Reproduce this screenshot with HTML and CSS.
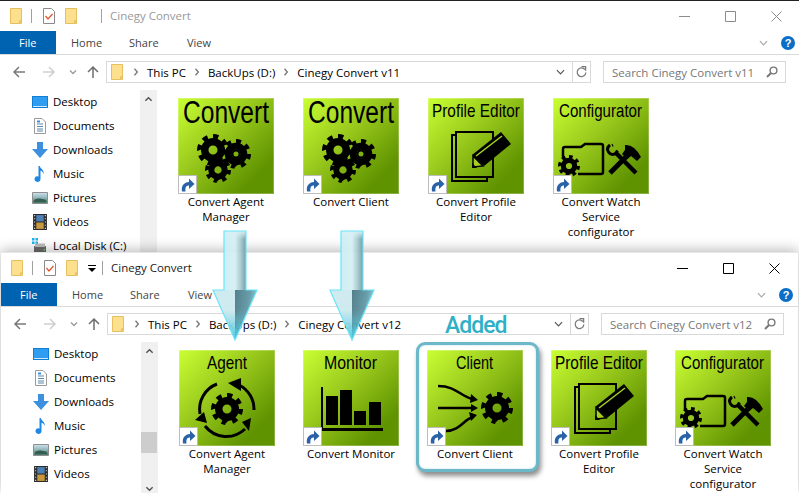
FILE: index.html
```html
<!DOCTYPE html>
<html lang="en">
<head>
    <meta charset="UTF-8">
    <title>Cinegy Convert</title>
    <link rel="stylesheet" href="styles.css">
</head>
<body>
    <!-- shared symbols -->
    <svg class="defs" aria-hidden="true">
        <defs>
            <linearGradient id="arrowFill" x1="0" y1="0" x2="1" y2="0">
                <stop offset="0" stop-color="#bfeef5"/>
                <stop offset="0.5" stop-color="#d6f0f4"/>
                <stop offset="0.62" stop-color="#a9ccd2"/>
                <stop offset="0.82" stop-color="#4f7f8b"/>
                <stop offset="1" stop-color="#6aa3af"/>
            </linearGradient>
            <linearGradient id="arrowTop" x1="0" y1="0" x2="0" y2="1">
                <stop offset="0" stop-color="#d6f0f4"/>
                <stop offset="1" stop-color="#d6f0f4" stop-opacity="0"/>
            </linearGradient>
            <linearGradient id="arrowShade" x1="0" y1="0" x2="1" y2="0.4">
                <stop offset="0" stop-color="#4a7885"/>
                <stop offset="0.6" stop-color="#5f97a4"/>
                <stop offset="1" stop-color="#8fd3df"/>
            </linearGradient>
            <linearGradient id="arrowTip" x1="0" y1="0" x2="0" y2="1">
                <stop offset="0.4" stop-color="#56c8dd" stop-opacity="0"/>
                <stop offset="1" stop-color="#3fc6de"/>
            </linearGradient>
            <linearGradient id="photo" x1="0" y1="0" x2="0" y2="1">
                <stop offset="0" stop-color="#cfe3ee"/>
                <stop offset="0.5" stop-color="#8fb4b8"/>
                <stop offset="1" stop-color="#3e6f60"/>
            </linearGradient>
        </defs>
        <symbol id="folder" viewBox="0 0 12 16">
            <path d="M.5.5h11v12.500h-2v2.500h-9z" fill="#fde08d" stroke="#e6c05f"/>
            <path d="M9.500 13h2v2.500h-2z" fill="#f5cf6e" stroke="#e6c05f"/>
        </symbol>
        <symbol id="check" viewBox="0 0 12 16">
            <path d="M.5.5h8l3 3v12h-11z" fill="#fff" stroke="#8a8a8a"/>
            <path d="M2.500 8l2.500 3 4.500-5" fill="none" stroke="#e4572b" stroke-width="1.300"/>
        </symbol>
        <symbol id="nav" viewBox="0 0 106 22">
            <path d="M25 11H14M19 6l-5 5 5 5" fill="none" stroke="#7a7a7a" stroke-width="1.500"/>
            <path d="M43 11h11M49 6l5 5-5 5" fill="none" stroke="#cfcfcf" stroke-width="1.500"/>
            <path d="M70 9.500l3 3 3-3" fill="none" stroke="#9a9a9a" stroke-width="1.300"/>
            <path d="M93 17V6M88 11l5-5 5 5" fill="none" stroke="#6e6e6e" stroke-width="1.500"/>
        </symbol>
        <symbol id="crumb" viewBox="0 0 4 8">
            <path d="M.5.8L3.300 4 .5 7.200" fill="none" stroke="#777" stroke-width="1.300"/>
        </symbol>
        <symbol id="chev-down" viewBox="0 0 10 6">
            <path d="M1 1l4 4 4-4" fill="none" stroke="currentColor" stroke-width="1.300"/>
        </symbol>
        <symbol id="chev-up" viewBox="0 0 10 6">
            <path d="M1.500 5L5 1.500 8.500 5" fill="none" stroke="#555" stroke-width="1.600"/>
        </symbol>
        <symbol id="refresh" viewBox="0 0 12 13">
            <path d="M9.800 4A4.700 4.700 0 1 0 10.700 7" fill="none" stroke="#7a7a7a" stroke-width="1.400"/>
            <path d="M6 .5h4.500V5" fill="none" stroke="#7a7a7a" stroke-width="1.400"/>
        </symbol>
        <symbol id="glass" viewBox="0 0 12 12">
            <circle cx="7.500" cy="4.500" r="3.400" fill="none" stroke="#777" stroke-width="1.400"/>
            <path d="M5 7l-4 4" stroke="#777" stroke-width="2"/>
        </symbol>
        <symbol id="min" viewBox="0 0 11 11"><path d="M0 5.500h11" stroke="currentColor"/></symbol>
        <symbol id="max" viewBox="0 0 11 11"><path d="M.5.5h10v10H.5z" fill="none" stroke="currentColor"/></symbol>
        <symbol id="close" viewBox="0 0 11 11"><path d="M.5.500l10 10M10.500.500l-10 10" stroke="currentColor"/></symbol>
        <symbol id="desktop" viewBox="0 0 16 12">
            <path d="M0 0h16v12H0z" fill="#0f7fd6"/>
            <path d="M1 1h14v9H1z" fill="#2f9df0"/>
            <path d="M1 10h14v1H1z" fill="#cfe7f8"/>
        </symbol>
        <symbol id="documents" viewBox="0 0 12 16">
            <path d="M.5.5h7.500l3.500 3.500v11.500H.5z" fill="#fff" stroke="#9a9a9a"/>
            <path d="M3 6h6M3 8.500h6M3 11h6M3 13h6" stroke="#5b87a8"/>
            <path d="M3 3.500h3" stroke="#3a8fd8" stroke-width="2"/>
        </symbol>
        <symbol id="downloads" viewBox="0 0 16 16">
            <path d="M5 0h6v7h5l-8 9-8-9h5z" fill="#3d8fdf"/>
        </symbol>
        <symbol id="music" viewBox="0 0 12 16">
            <path d="M4.500 0h1.300c.5 3 4.500 3.500 4 8-.6-2-2.200-3-3.300-3.200V13a3 2.800 0 1 1-2-2.500z" fill="#1e88e5"/>
        </symbol>
        <symbol id="pictures" viewBox="0 0 16 12">
            <path d="M.5.5h15v11H.5z" fill="url(#photo)" stroke="#8f8f8f"/>
            <path d="M2 8c3-2 6-2 12 0v2H2z" fill="#345e50"/>
        </symbol>
        <symbol id="videos" viewBox="0 0 13 15">
            <path d="M0 0h13v15H0z" fill="#2b2b2b"/>
            <path d="M3 1h7v6H3z" fill="#4c7fb5"/>
            <path d="M3 8h7v6H3z" fill="#c9983a"/>
            <path d="M1 1h1v1H1zM1 4h1v1H1zM1 7h1v1H1zM1 10h1v1H1zM1 13h1v1H1zM11 1h1v1h-1zM11 4h1v1h-1zM11 7h1v1h-1zM11 10h1v1h-1zM11 13h1v1h-1z" fill="#ddd"/>
        </symbol>
        <symbol id="disk" viewBox="0 0 16 16">
            <path d="M0 0h2.500v2.500H0zM3.500 0H6v2.500H3.500zM0 3.500h2.500V6H0zM3.500 3.500H6V6H3.500z" fill="#1eb2ee"/>
            <path d="M2 8h12v7H2z" fill="#6b6b6b"/>
            <path d="M3 5.500h10V9H3z" fill="#bdbdbd"/>
            <path d="M11.500 11h1.500v1.500h-1.500z" fill="#5fd35f"/>
        </symbol>
        <symbol id="gear" viewBox="-12 -12 24 24">
            <circle r="6.200" fill="none" stroke="#000" stroke-width="5.600"/>
            <circle r="9.800" fill="none" stroke="#000" stroke-width="4.400" pathLength="16" stroke-dasharray="1 1"/>
        </symbol>
        <symbol id="gears" viewBox="0 0 96 96">
            <use href="#gear" x="19" y="36" width="32" height="32"/>
            <use href="#gear" x="43" y="41" width="30" height="30"/>
            <circle cx="58" cy="56" r="3.500" fill="none" stroke="#000" stroke-width="2"/>
            <use href="#gear" x="27" y="59" width="26" height="26"/>
        </symbol>
        <symbol id="pic-profile" viewBox="0 0 96 96">
            <path class="pic-line" d="M28 37h-4v46h35v-4"/>
            <path class="pic-line" d="M28 34h37v45H28z"/>
            <path d="M44 57L73 34 83 46 56 68z"/>
            <path d="M48 58L74 38" stroke="#a6d224" stroke-width="1.500"/>
            <path d="M45 58l10 10-10 1z" fill="#a6cf22" stroke="#000" stroke-width="1.500"/>
            <path d="M44 70v-5l5 5z"/>
        </symbol>
        <symbol id="pic-config" viewBox="0 0 96 96">
            <path class="pic-line pic-arrow" d="M10 60V51q0-2 2-2h16l4-3h16q2 0 2 2v26q0 2-2 2H25"/>
            <use href="#gear" x="5" y="57" width="22" height="22"/>
            <path d="M57 75l21-21" stroke="#000" stroke-width="5"/>
            <path d="M72 47q9-1 16 12l-4 4-6-5-4 3-5-5 3-4z"/>
            <path d="M83 75L63 55" stroke="#000" stroke-width="4.500"/>
            <path class="pic-line pic-thick" stroke-width="3.500" d="M57 47q-4 3-1.500 7t7 1.500l2-3M60 47l-1 .5"/>
        </symbol>
        <symbol id="shortcut" viewBox="0 0 19 19">
            <path d="M.5.5h18v18H.5z" fill="#fff" stroke="#bdbdbd"/>
            <path d="M4 16.500c-1-6 2-9 7-9.500V3.500l5.500 5.500-5.500 5v-3.500c-3 0-4 2-3.500 6z" fill="#2a62a8"/>
        </symbol>
        <symbol id="arrow" viewBox="0 0 50 116">
            <path d="M14 2h22v59h11L25 111 3 61h11z" fill="url(#arrowFill)"/>
            <path d="M14 2h22v8H14z" fill="url(#arrowTop)"/>
            <path d="M3 61h22v50z" fill="#cdeaf0"/>
            <path d="M25 61h22L25 111z" fill="url(#arrowShade)"/>
            <path d="M3 61h44L25 111z" fill="url(#arrowTip)"/>
            <path d="M14 2h22v59h11L25 111 3 61h11z" fill="none" stroke="#63e4f8" stroke-width="1.200"/>
        </symbol>
    </svg>

    <!-- rear window -->
    <section class="win win-back">
        <header class="titlebar">
            <svg class="qat-icon qat-first"><use href="#folder"/></svg>
            <span class="qat-sep"></span>
            <svg class="qat-icon qat-check"><use href="#check"/></svg>
            <svg class="qat-icon qat-folder"><use href="#folder"/></svg>
            <span class="qat-drop"></span>
            <span class="qat-sep qat-sep-last"></span>
            <span class="win-title">Cinegy Convert</span>
            <div class="win-buttons">
                <svg><use href="#min"/></svg>
                <svg><use href="#max"/></svg>
                <svg><use href="#close"/></svg>
            </div>
        </header>
        <nav class="tabs">
            <span class="tab-file">File</span>
            <span class="tab tab-first">Home</span>
            <span class="tab">Share</span>
            <span class="tab">View</span>
            <svg class="ribbon-chev"><use href="#chev-down"/></svg>
            <span class="help">?</span>
        </nav>
        <div class="address-row">
            <svg class="nav-icons"><use href="#nav"/></svg>
            <div class="address">
                <svg class="crumb-folder"><use href="#folder"/></svg>
                <svg class="crumb-sep"><use href="#crumb"/></svg>
                <span>This PC</span>
                <svg class="crumb-sep"><use href="#crumb"/></svg>
                <span>BackUps (D:)</span>
                <svg class="crumb-sep"><use href="#crumb"/></svg>
                <span>Cinegy Convert v11</span>
                <svg class="address-chev"><use href="#chev-down"/></svg>
                <span class="address-refresh"><svg><use href="#refresh"/></svg></span>
            </div>
            <div class="search">
                <span>Search Cinegy Convert v11</span>
                <svg><use href="#glass"/></svg>
            </div>
        </div>
        <div class="main">
            <ul class="sidebar">
                <li><svg class="side-icon"><use href="#desktop"/></svg>Desktop</li>
                <li><svg class="side-icon"><use href="#documents"/></svg>Documents</li>
                <li><svg class="side-icon"><use href="#downloads"/></svg>Downloads</li>
                <li><svg class="side-icon"><use href="#music"/></svg>Music</li>
                <li><svg class="side-icon"><use href="#pictures"/></svg>Pictures</li>
                <li><svg class="side-icon"><use href="#videos"/></svg>Videos</li>
                <li><svg class="side-icon"><use href="#disk"/></svg>Local Disk (C:)</li>
            </ul>
            <div class="scrollbar">
                <svg class="scroll-chev"><use href="#chev-up"/></svg>
            </div>
            <div class="files files-back">
                <div class="file">
                    <div class="tile">
                        <svg viewBox="0 0 96 96">
                            <text class="tile-big" x="48" y="25" textLength="86" lengthAdjust="spacingAndGlyphs">Convert</text>
                            <use href="#gears" width="96" height="96"/>
                            <use href="#shortcut" x="0" y="77" width="19" height="19"/>
                        </svg>
                    </div>
                    <p class="file-name">Convert Agent Manager</p>
                </div>
                <div class="file">
                    <div class="tile">
                        <svg viewBox="0 0 96 96">
                            <text class="tile-big" x="48" y="25" textLength="86" lengthAdjust="spacingAndGlyphs">Convert</text>
                            <use href="#gears" width="96" height="96"/>
                            <use href="#shortcut" x="0" y="77" width="19" height="19"/>
                        </svg>
                    </div>
                    <p class="file-name">Convert Client</p>
                </div>
                <div class="file">
                    <div class="tile">
                        <svg viewBox="0 0 96 96">
                            <text class="tile-small" x="48" y="19" textLength="88" lengthAdjust="spacingAndGlyphs">Profile Editor</text>
                            <use href="#pic-profile" width="96" height="96"/>
                            <use href="#shortcut" x="0" y="77" width="19" height="19"/>
                        </svg>
                    </div>
                    <p class="file-name">Convert Profile Editor</p>
                </div>
                <div class="file">
                    <div class="tile">
                        <svg viewBox="0 0 96 96">
                            <text class="tile-small" x="47.500" y="19" textLength="83" lengthAdjust="spacingAndGlyphs">Configurator</text>
                            <use href="#pic-config" width="96" height="96"/>
                            <use href="#shortcut" x="0" y="77" width="19" height="19"/>
                        </svg>
                    </div>
                    <p class="file-name">Convert Watch Service configurator</p>
                </div>
            </div>
        </div>
    </section>

    <!-- front window -->
    <section class="win win-front">
        <header class="titlebar">
            <svg class="qat-icon qat-first"><use href="#folder"/></svg>
            <span class="qat-sep"></span>
            <svg class="qat-icon qat-check"><use href="#check"/></svg>
            <svg class="qat-icon qat-folder"><use href="#folder"/></svg>
            <span class="qat-drop qat-drop-on"></span>
            <span class="qat-sep qat-sep-last"></span>
            <span class="win-title">Cinegy Convert</span>
            <div class="win-buttons">
                <svg><use href="#min"/></svg>
                <svg><use href="#max"/></svg>
                <svg><use href="#close"/></svg>
            </div>
        </header>
        <nav class="tabs">
            <span class="tab-file">File</span>
            <span class="tab tab-first">Home</span>
            <span class="tab">Share</span>
            <span class="tab">View</span>
            <svg class="ribbon-chev"><use href="#chev-down"/></svg>
            <span class="help">?</span>
        </nav>
        <div class="address-row">
            <svg class="nav-icons"><use href="#nav"/></svg>
            <div class="address">
                <svg class="crumb-folder"><use href="#folder"/></svg>
                <svg class="crumb-sep"><use href="#crumb"/></svg>
                <span>This PC</span>
                <svg class="crumb-sep"><use href="#crumb"/></svg>
                <span>BackUps (D:)</span>
                <svg class="crumb-sep"><use href="#crumb"/></svg>
                <span>Cinegy Convert v12</span>
                <svg class="address-chev"><use href="#chev-down"/></svg>
                <span class="address-refresh"><svg><use href="#refresh"/></svg></span>
            </div>
            <div class="search">
                <span>Search Cinegy Convert v12</span>
                <svg><use href="#glass"/></svg>
            </div>
        </div>
        <div class="main">
            <ul class="sidebar">
                <li><svg class="side-icon"><use href="#desktop"/></svg>Desktop</li>
                <li><svg class="side-icon"><use href="#documents"/></svg>Documents</li>
                <li><svg class="side-icon"><use href="#downloads"/></svg>Downloads</li>
                <li><svg class="side-icon"><use href="#music"/></svg>Music</li>
                <li><svg class="side-icon"><use href="#pictures"/></svg>Pictures</li>
                <li><svg class="side-icon"><use href="#videos"/></svg>Videos</li>
            </ul>
            <div class="scrollbar">
                <svg class="scroll-chev"><use href="#chev-up"/></svg>
                <span class="scroll-thumb"></span>
                <svg class="scroll-chev scroll-chev-down"><use href="#chev-up"/></svg>
            </div>
            <div class="files files-front">
                <div class="file">
                    <div class="tile">
                        <svg viewBox="0 0 96 96">
                            <text class="tile-small" x="48" y="19" textLength="40" lengthAdjust="spacingAndGlyphs">Agent</text>
                            <use href="#gear" x="32" y="43" width="32" height="32"/>
                            <path class="pic-line pic-thick" d="M75 60A27 27 0 0 0 60 35"/>
                            <path class="pic-line pic-thick" d="M38 34A27 27 0 0 0 21 64"/>
                            <path class="pic-line pic-thick" d="M26 76A27 27 0 0 0 66 79"/>
                            <path d="M49 33L62 28 62 41z"/>
                            <path d="M25 62L16 70 28 73z"/>
                            <path d="M63 72L72 68 70 81z"/>
                            <use href="#shortcut" x="0" y="77" width="19" height="19"/>
                        </svg>
                    </div>
                    <p class="file-name">Convert Agent Manager</p>
                </div>
                <div class="file">
                    <div class="tile">
                        <svg viewBox="0 0 96 96">
                            <text class="tile-small" x="47.500" y="19" textLength="53" lengthAdjust="spacingAndGlyphs">Monitor</text>
                            <path d="M18 37h2v41h60v3H18z"/>
                            <path d="M23 46h12v29H23zM37 40h12v35H37zM51 61h12v14H51zM66 52h12v23H66z"/>
                            <use href="#shortcut" x="0" y="77" width="19" height="19"/>
                        </svg>
                    </div>
                    <p class="file-name">Convert Monitor</p>
                </div>
                <div class="file file-added">
                    <span class="added-label">Added</span>
                    <div class="tile">
                        <svg viewBox="0 0 96 96">
                            <text class="tile-small" x="47.500" y="19" textLength="37" lengthAdjust="spacingAndGlyphs">Client</text>
                            <path class="pic-line pic-arrow" d="M11 36c18 0 22 10 34 13"/>
                            <path class="pic-line pic-arrow" d="M11 58h34"/>
                            <path class="pic-line pic-arrow" d="M19 81c14 0 18-12 27-14"/>
                            <path d="M44 44l7 6-8 3zM44 54l7 4-7 4zM42 62l8 3-6 6z"/>
                            <use href="#gear" x="54" y="42" width="32" height="32"/>
                            <use href="#shortcut" x="0" y="77" width="19" height="19"/>
                        </svg>
                    </div>
                    <p class="file-name">Convert Client</p>
                </div>
                <div class="file">
                    <div class="tile">
                        <svg viewBox="0 0 96 96">
                            <text class="tile-small" x="48" y="19" textLength="88" lengthAdjust="spacingAndGlyphs">Profile Editor</text>
                            <use href="#pic-profile" width="96" height="96"/>
                            <use href="#shortcut" x="0" y="77" width="19" height="19"/>
                        </svg>
                    </div>
                    <p class="file-name">Convert Profile Editor</p>
                </div>
                <div class="file">
                    <div class="tile">
                        <svg viewBox="0 0 96 96">
                            <text class="tile-small" x="47.500" y="19" textLength="83" lengthAdjust="spacingAndGlyphs">Configurator</text>
                            <use href="#pic-config" width="96" height="96"/>
                            <use href="#shortcut" x="0" y="77" width="19" height="19"/>
                        </svg>
                    </div>
                    <p class="file-name">Convert Watch Service configurator</p>
                </div>
            </div>
        </div>
    </section>

    <!-- arrows drawn over both windows -->
    <svg class="big-arrow big-arrow-one"><use href="#arrow"/></svg>
    <svg class="big-arrow big-arrow-two"><use href="#arrow"/></svg>
</body>
</html>
```

FILE: styles.css
```css
* {
    box-sizing: border-box;
}

html,
body {
    margin: 0;
    height: 100%;
    overflow: hidden;
    background-color: #fff;
}

body {
    position: relative;
    font-family: "Open Sans", "Noto Sans", sans-serif;
    font-size: 11.500px;
    color: #000;
}

.defs {
    position: absolute;
    width: 0;
    height: 0;
}

/* windows sit on a free canvas */
.win {
    position: absolute;
    display: flex;
    flex-direction: column;
    background-color: #fff;
    overflow: hidden;
}

.win-back {
    left: 0;
    top: 0;
    width: 800px;
    height: 252px;
    border-top: 1px solid #222;
}

.win-front {
    left: 1px;
    top: 252px;
    width: 797px;
    height: 241px;
    border-top: 1px solid #e6e6e6;
    box-shadow: 0 -2px 12px rgba(0, 0, 0, 0.28);
    overflow: visible;
}

/* title bar */
.titlebar {
    display: flex;
    align-items: center;
    flex: none;
    height: 30px;
    padding-left: 10px;
}

.qat-icon {
    width: 12px;
    height: 16px;
}

.qat-sep {
    width: 1px;
    height: 14px;
    margin: 0 11px 0 9px;
    background-color: #a0a0a0;
}

.qat-sep-last {
    margin: 0 8px 0 0;
}

.qat-check,
.qat-folder {
    margin-right: 10px;
}

.qat-drop {
    width: 8px;
    height: 7px;
    margin-right: 6px;
}

.qat-drop-on {
    border-top: 1px solid #000;
    position: relative;
}

.qat-drop-on::after {
    content: "";
    position: absolute;
    left: 0;
    top: 2px;
    border-left: 4px solid transparent;
    border-right: 4px solid transparent;
    border-top: 4px solid #000;
}

.win-title {
    padding-bottom: 1px;
    color: #999;
}

.win-front .win-title {
    color: #222;
}

.win-buttons {
    display: flex;
    gap: 35px;
    margin-left: auto;
    padding-right: 18px;
    color: #8c8c8c;
}

.win-front .win-buttons {
    color: #000;
}

.win-buttons svg {
    width: 11px;
    height: 11px;
}

/* ribbon tabs */
.tabs {
    display: flex;
    align-items: center;
    flex: none;
    height: 24px;
    border-bottom: 1px solid #dadada;
    color: #444;
    font-size: 11px;
}

.tab-file {
    align-self: stretch;
    width: 56px;
    padding-left: 19px;
    line-height: 23px;
    background-color: #0063b1;
    color: #fff;
}

.tab {
    width: 58px;
}

.tab-first {
    margin-left: 15px;
}

.ribbon-chev {
    width: 9px;
    height: 6px;
    margin-left: auto;
    margin-right: 13px;
    color: #a8a8a8;
}

.help {
    width: 14px;
    height: 14px;
    margin-right: 5px;
    border-radius: 50%;
    background-color: #0a6ec8;
    color: #fff;
    font-family: "Liberation Sans", sans-serif;
    font-size: 11px;
    font-weight: bold;
    line-height: 14px;
    text-align: center;
}

/* address row */
.address-row {
    display: flex;
    flex: none;
    height: 35px;
    padding: 6px 14px 7px 0;
}

.nav-icons {
    flex: none;
    width: 106px;
    height: 22px;
}

.address {
    display: flex;
    align-items: center;
    flex: 1;
    gap: 9px;
    padding-left: 4px;
    border: 1px solid #d9d9d9;
    white-space: nowrap;
}

.crumb-folder {
    width: 12px;
    height: 16px;
    margin-right: 2px;
}

.crumb-sep {
    width: 4px;
    height: 8px;
}

.address-chev {
    width: 9px;
    height: 6px;
    margin-left: auto;
    margin-right: -2px;
    color: #555;
}

.address-refresh {
    display: flex;
    align-items: center;
    justify-content: center;
    align-self: stretch;
    width: 18px;
    border-left: 1px solid #d9d9d9;
}

.address-refresh svg {
    width: 11px;
    height: 12px;
}

.search {
    display: flex;
    align-items: center;
    justify-content: space-between;
    flex: none;
    width: 183px;
    margin-left: 12px;
    padding: 0 7px 0 8px;
    border: 1px solid #d9d9d9;
    color: #777;
    white-space: nowrap;
}

.search svg {
    width: 12px;
    height: 12px;
}

/* nav pane + content */
.main {
    display: flex;
    flex: 1;
    min-height: 0;
}

.sidebar {
    flex: none;
    width: 140px;
    margin: 0;
    padding: 0;
    list-style: none;
    overflow: hidden;
}

.sidebar li {
    display: flex;
    align-items: center;
    gap: 5px;
    height: 24px;
    padding: 0 0 1px 32px;
    white-space: nowrap;
}

.side-icon {
    flex: none;
    width: 16px;
    height: 16px;
}

.scrollbar {
    display: flex;
    flex-direction: column;
    align-items: center;
    flex: none;
    width: 16px;
    padding: 6px 0 1px;
    background-color: #f0f0f0;
}

.scroll-chev {
    flex: none;
    width: 9px;
    height: 6px;
}

.scroll-chev-down {
    margin-top: auto;
    transform: rotate(180deg);
}

.scroll-thumb {
    flex: none;
    width: 100%;
    height: 21px;
    margin-top: 78px;
    background-color: #cdcdcd;
}

.files {
    display: flex;
    align-items: flex-start;
    flex: 1;
    padding: 8px 0 0 21px;
    border-left: 1px solid #f0f0f0;
}

.files-back {
    gap: 29px;
}

.files-front {
    gap: 28px;
}

.file {
    position: relative;
    width: 96px;
}

.tile {
    width: 96px;
    height: 96px;
    background-image: linear-gradient(135deg, #c9ff33 0%, #98c81c 42%, #5f9300 82%, #5f9300 100%);
    box-shadow: inset 0 0 0 1px rgba(255, 255, 255, 0.25);
}

.tile svg {
    display: block;
    width: 96px;
    height: 96px;
}

.tile text {
    font-family: "Liberation Sans Narrow", "Liberation Sans", sans-serif;
    text-anchor: middle;
    fill: #000;
}

.tile-big {
    font-size: 31px;
}

.tile-small {
    font-size: 19px;
}

.pic-line {
    fill: none;
    stroke: #000;
    stroke-width: 2;
}

.pic-thick {
    stroke-width: 3;
}

.pic-arrow {
    stroke-width: 2.500;
}

.file-name {
    margin: 0;
    line-height: 15px;
    text-align: center;
}

/* highlight around the new icon */
.file-added::before {
    content: "";
    position: absolute;
    left: -11px;
    top: -8px;
    width: 117px;
    height: 124px;
    border: 3px solid #6cb8c9;
    border-radius: 9px;
    box-shadow: 2px 4px 5px rgba(0, 0, 0, 0.45), inset 0 0 2px rgba(108, 184, 201, 0.6);
    background-color: #fff;
}

.file-added .tile,
.file-added .file-name {
    position: relative;
}

.added-label {
    position: absolute;
    left: 18px;
    top: -38px;
    font-family: Roboto, sans-serif;
    font-size: 23px;
    font-weight: 500;
    letter-spacing: -1px;
    line-height: 27px;
    color: #2fb0c6;
}

.big-arrow {
    position: absolute;
    top: 229px;
    width: 50px;
    height: 116px;
    opacity: 0.94;
}

.big-arrow-one {
    left: 210px;
}

.big-arrow-two {
    left: 327px;
}
```
